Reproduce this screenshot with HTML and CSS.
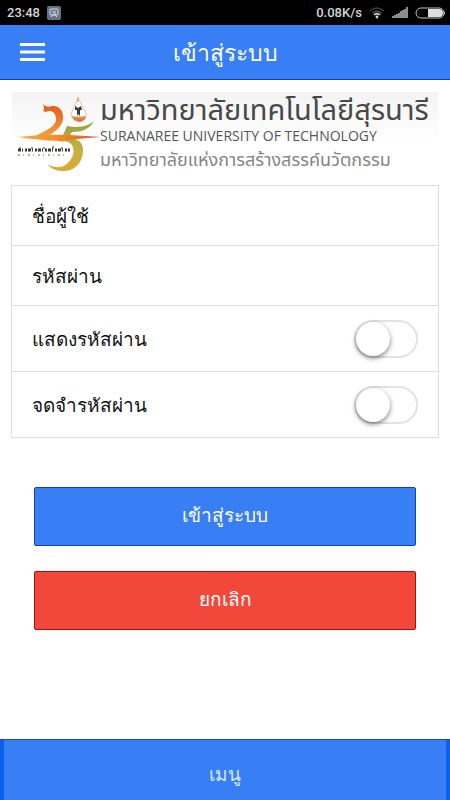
FILE: index.html
```html
<!DOCTYPE html>
<html lang="th">
<head>
    <meta charset="UTF-8">
    <meta name="viewport" content="width=device-width, initial-scale=1.0">
    <title>เข้าสู่ระบบ</title>
    <link rel="stylesheet" href="styles.css">
</head>
<body>
    <div class="status-bar">
        <span class="clock">23:48</span>
        <svg class="app-icon" width="14" height="14" viewBox="0 0 14 14" aria-hidden="true">
            <rect width="14" height="14" rx="2" fill="#68738a"/>
            <rect x="3" y="3" width="8" height="6" rx="1" fill="none" stroke="#d5dae3"/>
            <path d="M4 11L7 8L10 11M5 5L9 8M9 5L6 7" fill="none" stroke="#d5dae3"/>
        </svg>
        <span class="speed">0.08K/s</span>
        <svg width="16" height="12" viewBox="0 0 16 12" aria-hidden="true">
            <path d="M1 4Q8 -2 15 4" fill="none" stroke="#3b3b3b" stroke-width="1.6"/>
            <path d="M3.4 6.2Q8 2.2 12.6 6.2" fill="none" stroke="#555" stroke-width="1.4"/>
            <path d="M5 8Q8 5.4 11 8" fill="none" stroke="#ddd" stroke-width="1.6"/>
            <circle cx="8" cy="10" r="1.4" fill="#ddd"/>
        </svg>
        <svg width="16" height="12" viewBox="0 0 16 12" aria-hidden="true">
            <path d="M1 11v-2M3 11v-3M5 11v-4M7 11v-5M9 11v-7M11 11v-8M13 11v-9M15 11v-11" stroke="#c9c9c9" stroke-width="1.4"/>
        </svg>
        <svg class="battery" width="31" height="12" viewBox="0 0 31 12" aria-hidden="true">
            <rect x="1" y="1" width="28" height="10" rx="5" fill="none" stroke="#c4c4c4"/>
            <path d="M13 2h11a4 4 0 0 1 0 8H13z" fill="#dedede"/>
            <path d="M29 4q2 2 0 4z" fill="#c4c4c4"/>
        </svg>
    </div>

    <header class="bar">
        <button class="menu-button" aria-label="เมนู">
            <svg width="26" height="20" viewBox="0 0 26 20" aria-hidden="true">
                <path d="M1 2.5h25M1 10h25M1 17.5h25" stroke="#fff" stroke-width="2.8"/>
            </svg>
        </button>
        <h1 class="title">เข้าสู่ระบบ</h1>
    </header>

    <main class="content">
        <div class="logo">
            <svg class="emblem" width="85" height="81" viewBox="0 0 85 81" aria-hidden="true">
                <defs>
                    <linearGradient id="two" x1="0" y1="0" x2="0" y2="1">
                        <stop offset="0" stop-color="#e5591c"/>
                        <stop offset="1" stop-color="#f5a33a"/>
                    </linearGradient>
                    <linearGradient id="five" x1="0" y1="0" x2="0" y2="1">
                        <stop offset="0" stop-color="#93a43b"/>
                        <stop offset="0.6" stop-color="#c5b343"/>
                        <stop offset="1" stop-color="#dda52b"/>
                    </linearGradient>
                    <linearGradient id="line" x1="0" y1="0" x2="1" y2="0">
                        <stop offset="0" stop-color="#f4b04a"/>
                        <stop offset="0.5" stop-color="#f28a24"/>
                        <stop offset="1" stop-color="#df5a20"/>
                    </linearGradient>
                </defs>
                <path d="M31 12Q34 16 40 14C47 13 52 19 51 27C50 35 42 41 32 46L19 46C34 39 45 34 44 26C43 19 38 18 34 20L31 19Q33 17 31 12z" fill="url(#two)"/>
                <path d="M82 29C78 37 70 40 60 40L56 46C67 46 72 52 71 60C70 72 62 79 51 79C43 79 38 76 36 72C43 77 51 76 56 71C63 64 63 55 58 51C55 49 51 49 48 50L55 34C66 36 75 35 82 29z" fill="url(#five)"/>
                <path d="M6 45Q32 42 57 43Q75 44 89 45Q63 47 48 49Q25 48 6 45z" fill="url(#line)"/>
                <path d="M66 6L59 22Q60 29 67 29Q75 28 74 21z" fill="#fdfbf3" stroke="#d6cbaa"/>
                <path d="M60 24Q66 27 74 24Q73 30 67 30Q61 29 60 24z" fill="#dc7c48"/>
                <path d="M63 14l3 2 3-2 1 4-2 0v6l-2-2-1 2v-6l-2 0z" fill="#3b3b36"/>
                <path d="M66 5v5M61 25h12" stroke="#c19b56"/>
                <path d="M6 58h52" stroke="#3d3833" stroke-width="3" stroke-dasharray="3 1 1 2 2 1"/>
                <path d="M8 57v-2M20 57v-2M32 57v-2M41 57v-3M50 57v-2" stroke="#3d3833"/>
                <path d="M6 63h50" stroke="#6b625a" stroke-dasharray="2 3 1 4"/>
            </svg>
            <div class="logo-text">
                <strong class="name-th">มหาวิทยาลัยเทคโนโลยีสุรนารี</strong>
                <span class="name-en">SURANAREE UNIVERSITY OF TECHNOLOGY</span>
                <span class="slogan">มหาวิทยาลัยแห่งการสร้างสรรค์นวัตกรรม</span>
            </div>
        </div>

        <form class="login">
            <div class="list">
                <label class="item">
                    <span>ชื่อผู้ใช้</span>
                    <input class="field" type="text">
                </label>
                <label class="item">
                    <span>รหัสผ่าน</span>
                    <input class="field" type="password">
                </label>
                <label class="item item-toggle">
                    <span>แสดงรหัสผ่าน</span>
                    <input class="toggle" type="checkbox">
                </label>
                <label class="item item-toggle">
                    <span>จดจำรหัสผ่าน</span>
                    <input class="toggle" type="checkbox">
                </label>
            </div>

            <div class="buttons">
                <button class="button positive" type="button">เข้าสู่ระบบ</button>
                <button class="button assertive" type="button">ยกเลิก</button>
            </div>
        </form>
    </main>

    <footer class="footer">
        <button class="footer-button">เมนู</button>
    </footer>
</body>
</html>
```

FILE: styles.css
```css
* {
    box-sizing: border-box;
}

body {
    margin: 0;
    min-height: 100vh;
    display: flex;
    flex-direction: column;
    background: #fff;
    color: #111;
    font-family: "Noto Sans", sans-serif;
    font-size: 19px;
}

button, input {
    font-family: inherit;
    font-size: inherit;
}

button {
    cursor: pointer;
}

.status-bar {
    display: flex;
    align-items: center;
    gap: 7px;
    height: 25px;
    padding: 0 4px 0 7px;
    background: #000;
    color: #d6d6d6;
    font-family: Roboto, sans-serif;
    font-size: 13px;
    font-weight: 500;
}

.speed {
    margin-left: auto;
}

.bar {
    display: grid;
    grid-template-columns: 48px 1fr 48px;
    align-items: center;
    height: 55px;
    padding: 0 8px;
    background: #387ef5;
    border-bottom: 1px solid #0c43ae;
}

.menu-button {
    display: flex;
    justify-content: center;
    padding: 8px 0;
    background: none;
    border: 0;
}

.title {
    margin: 0;
    text-align: center;
    color: #fff;
    font-size: 23px;
    font-weight: 400;
    line-height: 48px;
}

.content {
    flex: 1;
    padding: 12px 11px;
}

.logo {
    display: flex;
    height: 81px;
    margin: 0 1px 12px;
    background: linear-gradient(#f3f3f3, #fff 60%);
}

.emblem {
    flex: none;
    overflow: visible;
}

.logo-text {
    display: flex;
    flex-direction: column;
    padding-left: 3px;
    font-family: Roboto, "Noto Sans Thai", "Noto Sans", sans-serif;
    white-space: nowrap;
}

.name-th {
    color: #484848;
    font-size: 29px;
    font-weight: 400;
    line-height: 36px;
}

.name-en {
    color: #555;
    font-family: "Open Sans", sans-serif;
    font-size: 14px;
    line-height: 16px;
}

.slogan {
    color: #858585;
    font-size: 18px;
    line-height: 32px;
}

.list {
    border: 1px solid #ddd;
    border-top: 0;
}

.item {
    display: flex;
    align-items: center;
    height: 60px;
    padding: 0 20px;
    border-top: 1px solid #ddd;
}

.item-toggle {
    height: 66px;
}

.field {
    flex: 1;
    min-width: 0;
    margin-left: 16px;
    border: 0;
    outline: 0;
    background: none;
}

.toggle {
    appearance: none;
    width: 64px;
    height: 38px;
    margin: 0 0 0 auto;
    border: 2px solid #e2e2e2;
    border-radius: 20px;
    background: #fff;
}

.toggle::before {
    content: "";
    display: block;
    width: 34px;
    height: 34px;
    border-radius: 50%;
    background: #fff;
    box-shadow: 0 2px 5px rgba(0, 0, 0, 0.5);
}

.toggle:checked {
    background: #387ef5;
    border-color: #387ef5;
}

.toggle:checked::before {
    margin-left: auto;
}

.buttons {
    display: flex;
    flex-direction: column;
    gap: 25px;
    padding: 49px 23px 0;
}

.button {
    height: 59px;
    padding: 0 12px 4px;
    border: 1px solid;
    border-radius: 2px;
    color: #fff;
}

.positive {
    background: #387ef5;
    border-color: #0c43ae;
}

.assertive {
    background: #f1483b;
    border-color: #a80f0a;
}

.footer {
    display: flex;
    height: 61px;
    padding: 0 4px;
    background: #0c60ee;
    border-top: 1px solid #1d4fa0;
}

.footer-button {
    flex: 1;
    padding: 8px 0 0;
    border: 0;
    background: #387ef5;
    color: #dce9ff;
}
```
